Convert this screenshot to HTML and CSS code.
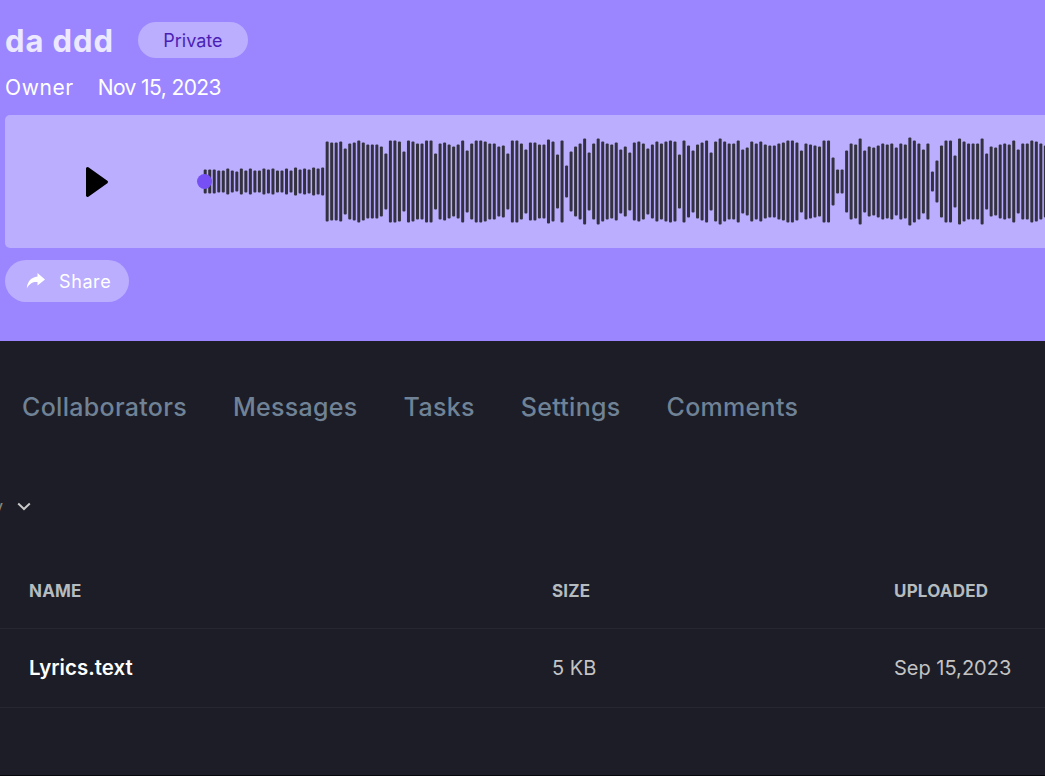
FILE: index.html
```html
<!DOCTYPE html>
<html lang="en">
<head>
    <meta charset="UTF-8">
    <title>da ddd</title>
    <link rel="stylesheet" href="styles.css">
</head>
<body>
    <section class="hero">
        <div class="title-row">
            <h1>da ddd</h1>
            <span class="pill">Private</span>
        </div>
        <div class="meta-row">
            <span class="owner">Owner</span>
            <span class="date">Nov 15, 2023</span>
        </div>
        <div class="player">
            <button class="play-btn" type="button" aria-label="Play">
                <svg width="24" height="32" viewBox="0 0 24 32"><path d="M2.5 2.5 L21.5 16 L2.5 29.5 Z" fill="#000" stroke="#000" stroke-width="3" stroke-linejoin="round"/></svg>
            </button>
            <svg id="wave" class="wave" width="850" height="133" viewBox="195 115 850 133"></svg>
        </div>
        <button class="share-btn" type="button">
            <svg width="20" height="18" viewBox="0 0 20 18"><path d="M11.5 1 L19 7.4 L11.5 13.6 V10 C7 9.6 3.4 11.4 0.8 16.4 C1.4 9.6 5.2 5.2 11.5 4.6 Z" fill="#fff"/></svg>
            Share
        </button>
    </section>

    <section class="content">
        <nav class="tabs">
            <a href="#">Collaborators</a>
            <a href="#">Messages</a>
            <a href="#">Tasks</a>
            <a href="#">Settings</a>
            <a href="#">Comments</a>
        </nav>

        <div class="sort">
            <span class="sort-label">Sort by</span>
            <svg width="14" height="9" viewBox="0 0 14 9"><path d="M1.2 1.5 L7 7 L12.8 1.5" fill="none" stroke="#c9c9c9" stroke-width="2"/></svg>
        </div>

        <table class="files">
            <thead>
                <tr>
                    <th>NAME</th>
                    <th>SIZE</th>
                    <th>UPLOADED</th>
                </tr>
            </thead>
            <tbody>
                <tr>
                    <td class="file-name">Lyrics.text</td>
                    <td>5 KB</td>
                    <td>Sep 15,2023</td>
                </tr>
            </tbody>
        </table>
    </section>

    <script src="waveform.js"></script>
</body>
</html>
```

FILE: styles.css
```css
* {
    box-sizing: border-box;
}
html, body {
    margin: 0;
    height: 776px;
    overflow: hidden;
}
body {
    font-family: Inter, "Open Sans", sans-serif;
    background-color: #1c1d26;
    border-bottom: 1px solid #08080c;
}
.hero {
    height: 341px;
    padding: 22px 0 0 5px;
    background-color: #9b86ff;
}
.title-row {
    display: flex;
    align-items: center;
    gap: 24px;
    width: 300px;
    height: 36px;
}
h1 {
    margin: 0;
    font-size: 31px;
    font-weight: 700;
    letter-spacing: 0.9px;
    color: #ece8ff;
}
.pill {
    display: flex;
    align-items: center;
    justify-content: center;
    width: 110px;
    height: 36px;
    border-radius: 18px;
    background-color: #bbaeff;
    color: #4b1fb4;
    font-size: 18px;
}
.meta-row {
    display: flex;
    gap: 24px;
    height: 57px;
    padding-top: 17px;
    color: #fff;
    font-size: 21px;
}
.owner {
    letter-spacing: 0.6px;
}
.date {
    letter-spacing: -0.6px;
}
.player {
    display: flex;
    align-items: center;
    height: 133px;
    border-radius: 5px 0 0 5px;
    background-color: #bbaeff;
    overflow: hidden;
}
.play-btn {
    flex: none;
    width: 190px;
    padding: 0 6px 0 0;
    border: 0;
    background: none;
    display: flex;
    justify-content: center;
}
.wave {
    flex: none;
}
.share-btn {
    display: flex;
    align-items: center;
    gap: 13px;
    width: 124px;
    height: 42px;
    margin-top: 12px;
    padding: 0 0 0 21px;
    border: 0;
    border-radius: 21px;
    background-color: #bbaeff;
    color: #fff;
    font-family: inherit;
    font-size: 18px;
    letter-spacing: 0.6px;
}
.tabs {
    display: flex;
    gap: 46px;
    padding: 51px 0 0 22px;
    height: 107px;
    font-size: 25px;
    font-weight: 500;
    letter-spacing: 0.3px;
}
.tabs a {
    color: #708296;
    text-decoration: none;
}
.sort {
    display: flex;
    align-items: center;
    gap: 14px;
    height: 28px;
    margin-left: -58px;
    margin-top: 44px;
    color: #8a8578;
    font-size: 18px;
}
.files {
    width: 1045px;
    border-collapse: collapse;
    table-layout: fixed;
}
th, td {
    padding: 0 0 0 29px;
    text-align: left;
    color: #c4c4c4;
    font-size: 20px;
    font-weight: 400;
}
th:nth-child(1), td:nth-child(1) {
    width: 523px;
}
th:nth-child(2), td:nth-child(2) {
    width: 342px;
}
th {
    height: 108px;
    padding-top: 34px;
    color: #b5bcc0;
    font-size: 17px;
    font-weight: 700;
    letter-spacing: 0.2px;
    border-bottom: 1px solid #262731;
}
td {
    height: 79px;
    border-bottom: 1px solid #262731;
}
td.file-name {
    color: #fff;
    font-size: 20.5px;
    font-weight: 600;
}
```

FILE: waveform.js
```js
// half heights of the bars, read left to right
const amps = [
    12, 12, 12, 11, 11, 13, 11, 10, 13, 11, 13, 11, 11, 13, 12, 13, 11, 11, 13, 11, 14, 12, 13, 12, 14, 13,
    14, 40, 39, 39, 40, 33, 38, 39, 41, 39, 37, 37, 37, 35, 28, 41, 41, 40, 30, 41, 40, 38, 38, 41,
    41, 28, 38, 39, 37, 35, 37, 41, 31, 38, 41, 41, 40, 38, 38, 35, 36, 28, 41, 41, 38, 32, 39, 39, 37,
    37, 42, 40, 27, 41, 16, 30, 35, 38, 43, 29, 38, 43, 40, 38, 37, 39, 32, 35, 29, 39, 40, 38, 33, 37,
    40, 38, 40, 41, 40, 27,
    41, 36, 31, 37, 39, 41, 29, 40, 43, 40, 38, 38, 41, 32, 34, 40, 38, 40, 37, 36, 36, 38, 39, 41,
    41, 39, 31, 38, 37, 36, 35, 41, 41, 24, 12, 12, 31, 38, 37, 43, 31, 35, 34, 36, 38, 37, 38, 34, 38,
    37, 44, 41, 38, 32, 38, 10, 21, 36, 41, 41, 26, 43, 40, 38, 38, 38, 43, 28, 35, 34, 37, 38, 37, 41,
    32, 38, 38, 41, 40, 38, 36
];

const svg = document.getElementById('wave');
const NS = 'http://www.w3.org/2000/svg';
const midY = 181.5;

amps.forEach((a, i) => {
    const bar = document.createElementNS(NS, 'rect');
    bar.setAttribute('x', (203.7 + i * 4.517).toFixed(2));
    bar.setAttribute('y', midY - a);
    bar.setAttribute('width', 3);
    bar.setAttribute('height', a * 2);
    bar.setAttribute('rx', 1);
    bar.setAttribute('fill', '#33313f');
    svg.appendChild(bar);
});

const dot = document.createElementNS(NS, 'circle');
dot.setAttribute('cx', 204.5);
dot.setAttribute('cy', 181.5);
dot.setAttribute('r', 7.5);
dot.setAttribute('fill', '#7650f5');
svg.appendChild(dot);
```
